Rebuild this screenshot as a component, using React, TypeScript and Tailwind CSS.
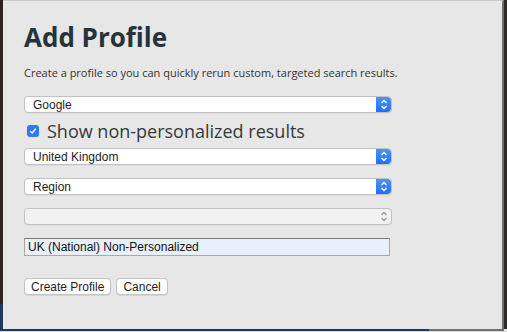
import React from 'react';

const SelectArrows = ({ disabled }: { disabled?: boolean }) => (
  <svg width="8" height="11" viewBox="0 0 8 11" fill="none">
    <path d="M1.5 4L4 1.5L6.5 4" stroke={disabled ? '#9a9a9a' : '#ffffff'} strokeWidth="1.3" />
    <path d="M1.5 7L4 9.5L6.5 7" stroke={disabled ? '#9a9a9a' : '#ffffff'} strokeWidth="1.3" />
  </svg>
);

const MacSelect = ({ label, disabled }: { label: string; disabled?: boolean }) => (
  <div
    className={`flex h-[17px] w-[368px] items-stretch rounded-[4px] border border-[#c2c2c2] shadow-[0_0.5px_0_rgba(0,0,0,0.08)] ${
      disabled ? 'bg-[#f1f2f1]' : 'bg-white'
    }`}
  >
    <div className="flex flex-1 items-center pl-2 font-['Liberation_Sans',sans-serif] text-[12px] leading-none text-[#1e1e1e]">
      {label}
    </div>
    <div
      className={`flex w-[15px] items-center justify-center rounded-r-[4px] ${
        disabled ? '' : 'bg-gradient-to-b from-[#4b94ff] to-[#1f6ff5]'
      }`}
    >
      <SelectArrows disabled={disabled} />
    </div>
  </div>
);

const MacButton = ({ label }: { label: string }) => (
  <button className="h-[17px] rounded-[4px] border border-[#c4c4c4] bg-white px-[6px] font-['Liberation_Sans',sans-serif] text-[12px] leading-none text-[#1e1e1e] shadow-[0_0.5px_0_rgba(0,0,0,0.15)]">
    {label}
  </button>
);

export default function App() {
  return (
    <div className="flex h-[332px] w-[507px] flex-col overflow-hidden bg-[#e9e9e9] font-['Open_Sans',sans-serif]">
      <div className="flex h-[329px]">
        <div className="flex w-[3px] flex-col">
          <div className="h-[304px] bg-[#2b2420]" />
          <div className="flex-1 bg-[#1d3766]" />
        </div>
        <div className="flex flex-1 flex-col border-r-2 border-t border-r-[#6f6f6f] border-t-[#c8c8c8] bg-[#e6e7e6] pl-[21px]">
          <h1 className="mt-[20px] text-[26px] font-bold leading-[32px] text-[#26343a]">Add Profile</h1>
          <p className="mt-[12px] text-[11px] leading-[16px] text-[#333333]">
            Create a profile so you can quickly rerun custom, targeted search results.
          </p>
          <div className="mt-[15px]">
            <MacSelect label="Google" />
          </div>
          <label className="mt-[8px] flex items-center gap-[8px] pl-[3px]">
            <span className="flex h-[12px] w-[12px] items-center justify-center rounded-[3px] bg-[#2f7bf6]">
              <svg width="8" height="8" viewBox="0 0 8 8" fill="none">
                <path d="M1.3 4.2L3.2 6L6.7 1.8" stroke="#ffffff" strokeWidth="1.4" />
              </svg>
            </span>
            <span className="text-[18px] leading-[20px] text-[#333a3d]">Show non-personalized results</span>
          </label>
          <div className="mt-[7px]">
            <MacSelect label="United Kingdom" />
          </div>
          <div className="mt-[13px]">
            <MacSelect label="Region" />
          </div>
          <div className="mt-[13px]">
            <MacSelect label="" disabled />
          </div>
          <div className="mt-[13px] flex h-[18px] w-[366px] items-center border border-[#a9a9a9] border-t-[#7a7a7a] bg-[#e8f0fe] pl-[3px] font-['Liberation_Sans',sans-serif] text-[12px] leading-none text-[#111111]">
            UK (National) Non-Personalized
          </div>
          <div className="mt-[22px] flex gap-[5px]">
            <MacButton label="Create Profile" />
            <MacButton label="Cancel" />
          </div>
        </div>
        <div className="w-[3px] bg-[#2e2a28]" />
      </div>
      <div className="flex h-[2px]">
        <div className="w-[429px] bg-[#1d3766]" />
        <div className="w-[75px] bg-[#6f6f6f]" />
      </div>
      <div className="flex-1 bg-[#d8d8d8]" />
    </div>
  );
}
